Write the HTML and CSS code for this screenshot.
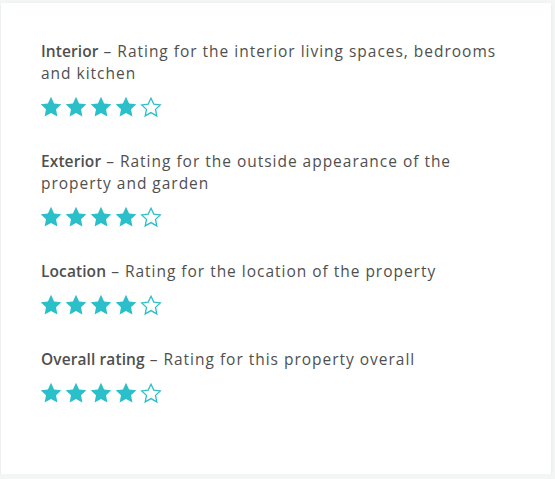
FILE: index.html
```html
<!DOCTYPE html>
<html>
<head>
<meta charset="utf-8">
<link rel="stylesheet" href="styles.css">
</head>
<body>
<div class="card">
  <div class="item">
    <p class="desc"><strong>Interior</strong> – Rating for the interior living spaces, bedrooms and kitchen</p>
    <div class="stars">
      <svg class="star" viewBox="0 0 24 24"><path class="full" d="M12 1.8l3.1 6.6 7.2.9-5.3 5 1.4 7.1L12 17.9l-6.4 3.5 1.4-7.1-5.3-5 7.2-.9z"/></svg>
      <svg class="star" viewBox="0 0 24 24"><path class="full" d="M12 1.8l3.1 6.6 7.2.9-5.3 5 1.4 7.1L12 17.9l-6.4 3.5 1.4-7.1-5.3-5 7.2-.9z"/></svg>
      <svg class="star" viewBox="0 0 24 24"><path class="full" d="M12 1.8l3.1 6.6 7.2.9-5.3 5 1.4 7.1L12 17.9l-6.4 3.5 1.4-7.1-5.3-5 7.2-.9z"/></svg>
      <svg class="star" viewBox="0 0 24 24"><path class="full" d="M12 1.8l3.1 6.6 7.2.9-5.3 5 1.4 7.1L12 17.9l-6.4 3.5 1.4-7.1-5.3-5 7.2-.9z"/></svg>
      <svg class="star" viewBox="0 0 24 24"><path class="empty" d="M12 3.2l2.8 5.9 6.5.8-4.8 4.5 1.3 6.5L12 17.6l-5.8 3.3 1.3-6.5-4.8-4.5 6.5-.8z"/></svg>
    </div>
  </div>
  <div class="item">
    <p class="desc"><strong>Exterior</strong> – Rating for the outside appearance of the property and garden</p>
    <div class="stars">
      <svg class="star" viewBox="0 0 24 24"><path class="full" d="M12 1.8l3.1 6.6 7.2.9-5.3 5 1.4 7.1L12 17.9l-6.4 3.5 1.4-7.1-5.3-5 7.2-.9z"/></svg>
      <svg class="star" viewBox="0 0 24 24"><path class="full" d="M12 1.8l3.1 6.6 7.2.9-5.3 5 1.4 7.1L12 17.9l-6.4 3.5 1.4-7.1-5.3-5 7.2-.9z"/></svg>
      <svg class="star" viewBox="0 0 24 24"><path class="full" d="M12 1.8l3.1 6.6 7.2.9-5.3 5 1.4 7.1L12 17.9l-6.4 3.5 1.4-7.1-5.3-5 7.2-.9z"/></svg>
      <svg class="star" viewBox="0 0 24 24"><path class="full" d="M12 1.8l3.1 6.6 7.2.9-5.3 5 1.4 7.1L12 17.9l-6.4 3.5 1.4-7.1-5.3-5 7.2-.9z"/></svg>
      <svg class="star" viewBox="0 0 24 24"><path class="empty" d="M12 3.2l2.8 5.9 6.5.8-4.8 4.5 1.3 6.5L12 17.6l-5.8 3.3 1.3-6.5-4.8-4.5 6.5-.8z"/></svg>
    </div>
  </div>
  <div class="item">
    <p class="desc"><strong>Location</strong> – Rating for the location of the property</p>
    <div class="stars">
      <svg class="star" viewBox="0 0 24 24"><path class="full" d="M12 1.8l3.1 6.6 7.2.9-5.3 5 1.4 7.1L12 17.9l-6.4 3.5 1.4-7.1-5.3-5 7.2-.9z"/></svg>
      <svg class="star" viewBox="0 0 24 24"><path class="full" d="M12 1.8l3.1 6.6 7.2.9-5.3 5 1.4 7.1L12 17.9l-6.4 3.5 1.4-7.1-5.3-5 7.2-.9z"/></svg>
      <svg class="star" viewBox="0 0 24 24"><path class="full" d="M12 1.8l3.1 6.6 7.2.9-5.3 5 1.4 7.1L12 17.9l-6.4 3.5 1.4-7.1-5.3-5 7.2-.9z"/></svg>
      <svg class="star" viewBox="0 0 24 24"><path class="full" d="M12 1.8l3.1 6.6 7.2.9-5.3 5 1.4 7.1L12 17.9l-6.4 3.5 1.4-7.1-5.3-5 7.2-.9z"/></svg>
      <svg class="star" viewBox="0 0 24 24"><path class="empty" d="M12 3.2l2.8 5.9 6.5.8-4.8 4.5 1.3 6.5L12 17.6l-5.8 3.3 1.3-6.5-4.8-4.5 6.5-.8z"/></svg>
    </div>
  </div>
  <div class="item">
    <p class="desc"><strong>Overall rating</strong> – Rating for this property overall</p>
    <div class="stars">
      <svg class="star" viewBox="0 0 24 24"><path class="full" d="M12 1.8l3.1 6.6 7.2.9-5.3 5 1.4 7.1L12 17.9l-6.4 3.5 1.4-7.1-5.3-5 7.2-.9z"/></svg>
      <svg class="star" viewBox="0 0 24 24"><path class="full" d="M12 1.8l3.1 6.6 7.2.9-5.3 5 1.4 7.1L12 17.9l-6.4 3.5 1.4-7.1-5.3-5 7.2-.9z"/></svg>
      <svg class="star" viewBox="0 0 24 24"><path class="full" d="M12 1.8l3.1 6.6 7.2.9-5.3 5 1.4 7.1L12 17.9l-6.4 3.5 1.4-7.1-5.3-5 7.2-.9z"/></svg>
      <svg class="star" viewBox="0 0 24 24"><path class="full" d="M12 1.8l3.1 6.6 7.2.9-5.3 5 1.4 7.1L12 17.9l-6.4 3.5 1.4-7.1-5.3-5 7.2-.9z"/></svg>
      <svg class="star" viewBox="0 0 24 24"><path class="empty" d="M12 3.2l2.8 5.9 6.5.8-4.8 4.5 1.3 6.5L12 17.6l-5.8 3.3 1.3-6.5-4.8-4.5 6.5-.8z"/></svg>
    </div>
  </div>
</div>
</body>
</html>
```
FILE: styles.css
```css
html, body {
  margin: 0;
  padding: 0;
  background: #f4f5f5;
}
body {
  font-family: "Open Sans", "Noto Sans", sans-serif;
  color: #4f4f4f;
}
.card {
  box-sizing: border-box;
  margin: 3px 0 0 1px;
  width: 550px;
  height: 471px;
  background: #ffffff;
  box-shadow: 0 1px 3px rgba(0, 0, 0, 0.08);
  padding: 37px 40px 0 38px;
}
.item {
  margin-bottom: 31px;
}
.desc {
  margin: 0 0 0 2px;
  font-size: 15.5px;
  line-height: 22px;
  letter-spacing: 0.98px;
}
.desc strong {
  font-weight: 600;
  letter-spacing: 0.1px;
}
.stars {
  display: flex;
  gap: 1px;
  margin-top: 11px;
  height: 24px;
  align-items: center;
}
.star {
  width: 24px;
  height: 24px;
  display: block;
}
.star .full {
  fill: #2bbfca;
}
.star .empty {
  fill: none;
  stroke: #2bbfca;
  stroke-width: 1.3;
  stroke-linejoin: miter;
}
```
